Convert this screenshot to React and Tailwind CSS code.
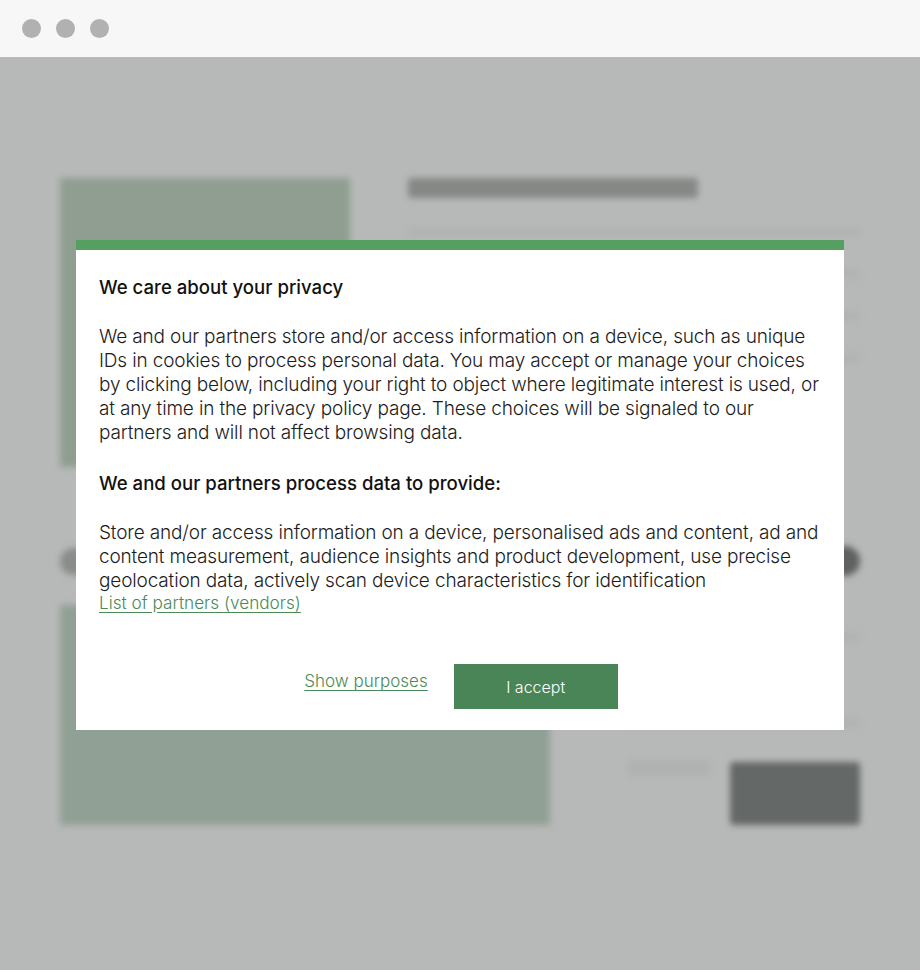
import React from "react";

export default function App() {
  return (
    <div className="relative w-[920px] h-[970px] overflow-hidden bg-[#b7b9b8]" style={{ fontFamily: "Inter, 'Liberation Sans', sans-serif" }}>
      {/* window top bar */}
      <div className="h-[57px] bg-[#f7f7f7] flex items-center gap-[15px] pl-[22px]">
        <span className="w-[19px] h-[19px] rounded-full bg-[#b0b1b0]" />
        <span className="w-[19px] h-[19px] rounded-full bg-[#b0b1b0]" />
        <span className="w-[19px] h-[19px] rounded-full bg-[#b0b1b0]" />
      </div>

      {/* blurred page */}
      <div className="blur-[3px] px-[60px] pt-[121px]">
        <div className="flex gap-[58px]">
          <div className="w-[290px] h-[289px] bg-[#8f9e91]" />
          <div className="flex-1 flex flex-col">
            <div className="w-[290px] h-[20px] rounded bg-[#868886]" />
            <div className="mt-[30px] h-[8px] bg-[#b1b2b1]" />
            <div className="mt-[34px] ml-auto w-[20px] h-[8px] bg-[#b1b2b1]" />
            <div className="mt-[34px] ml-auto w-[20px] h-[8px] bg-[#b1b2b1]" />
            <div className="mt-[34px] ml-auto w-[20px] h-[8px] bg-[#b1b2b1]" />
          </div>
        </div>
        <div className="mt-[81px] h-[27px] rounded-full bg-[#8a8c8a] flex justify-end">
          <div className="w-[30px] h-[30px] -mt-[2px] rounded-full bg-[#5e615f]" />
        </div>
        <div className="mt-[30px] flex gap-[78px]">
          <div className="w-[490px] h-[220px] bg-[#91a095]" />
          <div className="flex-1 flex flex-col">
            <div className="mt-[28px] ml-auto w-[20px] h-[8px] bg-[#b1b2b1]" />
            <div className="mt-[78px] h-[8px] bg-[#b1b2b1]" />
            <div className="mt-[35px] flex items-start justify-between">
              <div className="mt-[-2px] w-[82px] h-[16px] bg-[#b0b1b0]" />
              <div className="w-[130px] h-[63px] rounded bg-[#646866]" />
            </div>
          </div>
        </div>
      </div>

      {/* modal */}
      <div className="absolute left-[76px] top-[240px] w-[768px] h-[490px] bg-white border-t-[10px] border-[#55a061]">
        <div className="pl-[23px] pr-[20px] pt-[25px]">
          <h2 className="text-[18.6px] leading-[24px] font-medium text-[#111]">We care about your privacy</h2>
          <p className="mt-[26px] text-[19px] leading-[24px] font-light tracking-[-0.15px] text-[#1c1c1c]">
            We and our partners store and/or access information on a device, such as unique IDs in cookies to process personal data. You may accept or manage your choices by clicking below, including your right to object where legitimate interest is used, or at any time in the privacy policy page. These choices will be signaled to our partners and will not affect browsing data.
          </p>
          <h3 className="mt-[26px] text-[18.6px] leading-[24px] font-medium text-[#111]">We and our partners process data to provide:</h3>
          <p className="mt-[26px] text-[19px] leading-[24px] font-light tracking-[-0.15px] text-[#1c1c1c]">
            Store and/or access information on a device, personalised ads and content, ad and content measurement, audience insights and product development, use precise geolocation data, actively scan device characteristics for identification
          </p>
          <a href="#" className="block text-[17.2px] leading-[20px] font-light text-[#4a8a57] underline underline-offset-[3px]">List of partners (vendors)</a>
          <div className="mt-[51px] flex justify-center items-center gap-[26px] pr-[1px]">
            <a href="#" className="mb-[9px] text-[17px] font-light text-[#4a8a57] underline underline-offset-[3px]">Show purposes</a>
            <button className="w-[164px] h-[45px] bg-[#498556] text-white text-[16px] font-light">I accept</button>
          </div>
        </div>
      </div>
    </div>
  );
}
